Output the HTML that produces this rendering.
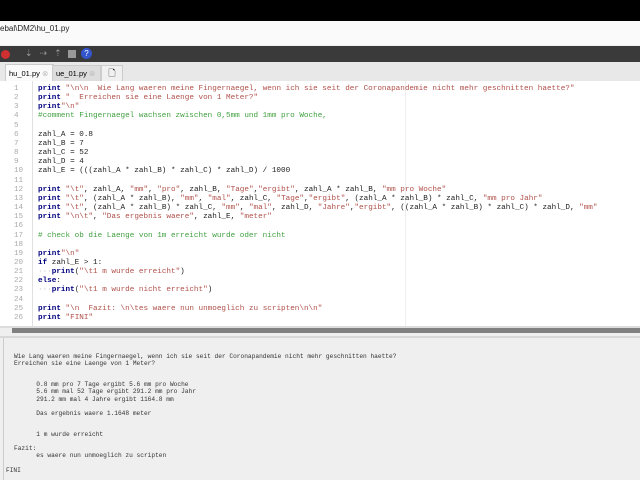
<!DOCTYPE html>
<html><head><meta charset="utf-8"><style>
body{margin:0;width:640px;height:480px;overflow:hidden;background:#efefef;font-family:"Liberation Sans",sans-serif;position:relative}
.a{position:absolute}
#code{left:0;top:81px;width:640px;height:245px;background:#fff}
.ln{position:absolute;left:14px;width:18px;font:7.6px "Liberation Mono",monospace;color:#aaa}
pre{margin:0;position:absolute;left:38px;top:85px;font:7.65px/9.16px "Liberation Mono",monospace;color:#222}
.k{color:#00007f;font-weight:bold}.s{color:#b0504a}.c{color:#3f9f3f}
.o{margin:0;position:absolute;left:14px;top:353px;font:6.2px/7.1px "Liberation Mono",monospace;color:#333}
</style></head><body>
<div class="a" style="left:0;top:0;width:640px;height:21px;background:#000"></div>
<div class="a" style="left:0;top:21px;width:640px;height:24px;background:#fafafa"></div>
<div class="a" style="left:0;top:24px;font-size:8px;color:#222">ebal\DM2\hu_01.py</div>
<div class="a" style="left:0;top:46px;width:640px;height:16px;background:#3a3a3a"></div>
<div class="a" style="left:1px;top:50px;width:9px;height:9px;border-radius:50%;background:#d03030"></div>
<div class="a" style="left:25px;top:48px;color:#999;font-size:9px;letter-spacing:7px">⇣⇢⇡</div>
<div class="a" style="left:68px;top:50px;width:8px;height:8px;background:#999"></div>
<div class="a" style="left:81px;top:48px;width:11px;height:11px;border-radius:50%;background:#3355cc;color:#fff;font-size:8px;text-align:center;line-height:11px">?</div>
<div class="a" style="left:0;top:62px;width:640px;height:19px;background:#e8e8e8"></div>
<div class="a" style="left:5px;top:64px;width:44px;height:17px;background:#fafafa;border:1px solid #ccc;border-bottom:none;font-size:7.5px;line-height:17px;padding-left:3px">hu_01.py <span style="color:#bbb">⊗</span></div>
<div class="a" style="left:52px;top:65px;width:44px;height:16px;background:#ddd;border:1px solid #ccc;font-size:7.5px;line-height:16px;padding-left:3px">ue_01.py <span style="color:#bbb">⊗</span></div>
<div class="a" style="left:101px;top:65px;width:20px;height:16px;background:#f0f0f0;border:1px solid #ccc;font-size:9px;text-align:center">🗋</div>
<div id="code" class="a"></div>
<div class="a" style="left:32px;top:81px;width:1px;height:245px;background:#e0e0e0"></div>
<div class="a" style="left:405px;top:81px;width:1px;height:245px;background:#eee"></div>
<div class="ln" style="top:85px;line-height:9.16px">1<br>2<br>3<br>4<br>5<br>6<br>7<br>8<br>9<br>10<br>11<br>12<br>13<br>14<br>15<br>16<br>17<br>18<br>19<br>20<br>21<br>22<br>23<br>24<br>25<br>26</div>
<pre><span class="k">print</span> <span class="s">"\n\n  Wie Lang waeren meine Fingernaegel, wenn ich sie seit der Coronapandemie nicht mehr geschnitten haette?"</span>
<span class="k">print</span> <span class="s">"  Erreichen sie eine Laenge von 1 Meter?"</span>
<span class="k">print</span><span class="s">"\n"</span>
<span class="c">#comment Fingernaegel wachsen zwischen 0,5mm und 1mm pro Woche,</span>

zahl_A = 0.8
zahl_B = 7
zahl_C = 52
zahl_D = 4
zahl_E = (((zahl_A * zahl_B) * zahl_C) * zahl_D) / 1000

<span class="k">print</span> <span class="s">"\t"</span>, zahl_A, <span class="s">"mm"</span>, <span class="s">"pro"</span>, zahl_B, <span class="s">"Tage"</span>,<span class="s">"ergibt"</span>, zahl_A * zahl_B, <span class="s">"mm pro Woche"</span>
<span class="k">print</span> <span class="s">"\t"</span>, (zahl_A * zahl_B), <span class="s">"mm"</span>, <span class="s">"mal"</span>, zahl_C, <span class="s">"Tage"</span>,<span class="s">"ergibt"</span>, (zahl_A * zahl_B) * zahl_C, <span class="s">"mm pro Jahr"</span>
<span class="k">print</span> <span class="s">"\t"</span>, (zahl_A * zahl_B) * zahl_C, <span class="s">"mm"</span>, <span class="s">"mal"</span>, zahl_D, <span class="s">"Jahre"</span>,<span class="s">"ergibt"</span>, ((zahl_A * zahl_B) * zahl_C) * zahl_D, <span class="s">"mm"</span>
<span class="k">print</span> <span class="s">"\n\t"</span>, <span class="s">"Das ergebnis waere"</span>, zahl_E, <span class="s">"meter"</span>

<span class="c"># check ob die Laenge von 1m erreicht wurde oder nicht</span>

<span class="k">print</span><span class="s">"\n"</span>
<span class="k">if</span> zahl_E &gt; 1:
<span style="color:#bbb">···</span><span class="k">print</span>(<span class="s">"\t1 m wurde erreicht"</span>)
<span class="k">else</span>:
<span style="color:#bbb">···</span><span class="k">print</span>(<span class="s">"\t1 m wurde nicht erreicht"</span>)

<span class="k">print</span> <span class="s">"\n  Fazit: \n\tes waere nun unmoeglich zu scripten\n\n"</span>
<span class="k">print</span> <span class="s">"FINI"</span></pre>
<div class="a" style="left:0;top:326px;width:640px;height:2px;background:#ddd"></div>
<div class="a" style="left:12px;top:328px;width:628px;height:5px;background:#808080"></div>
<div class="a" style="left:0;top:336px;width:640px;height:2px;background:#d8d8d8"></div>
<div class="a" style="left:3px;top:338px;width:1px;height:142px;background:#ccc"></div>
<pre class="o">Wie Lang waeren meine Fingernaegel, wenn ich sie seit der Coronapandemie nicht mehr geschnitten haette?
Erreichen sie eine Laenge von 1 Meter?


      0.8 mm pro 7 Tage ergibt 5.6 mm pro Woche
      5.6 mm mal 52 Tage ergibt 291.2 mm pro Jahr
      291.2 mm mal 4 Jahre ergibt 1164.8 mm

      Das ergebnis waere 1.1648 meter


      1 m wurde erreicht

Fazit:
      es waere nun unmoeglich zu scripten


</pre>
<div class="a" style="left:6px;top:467px;font:6.2px 'Liberation Mono',monospace;color:#333">FINI</div>
</body></html>
